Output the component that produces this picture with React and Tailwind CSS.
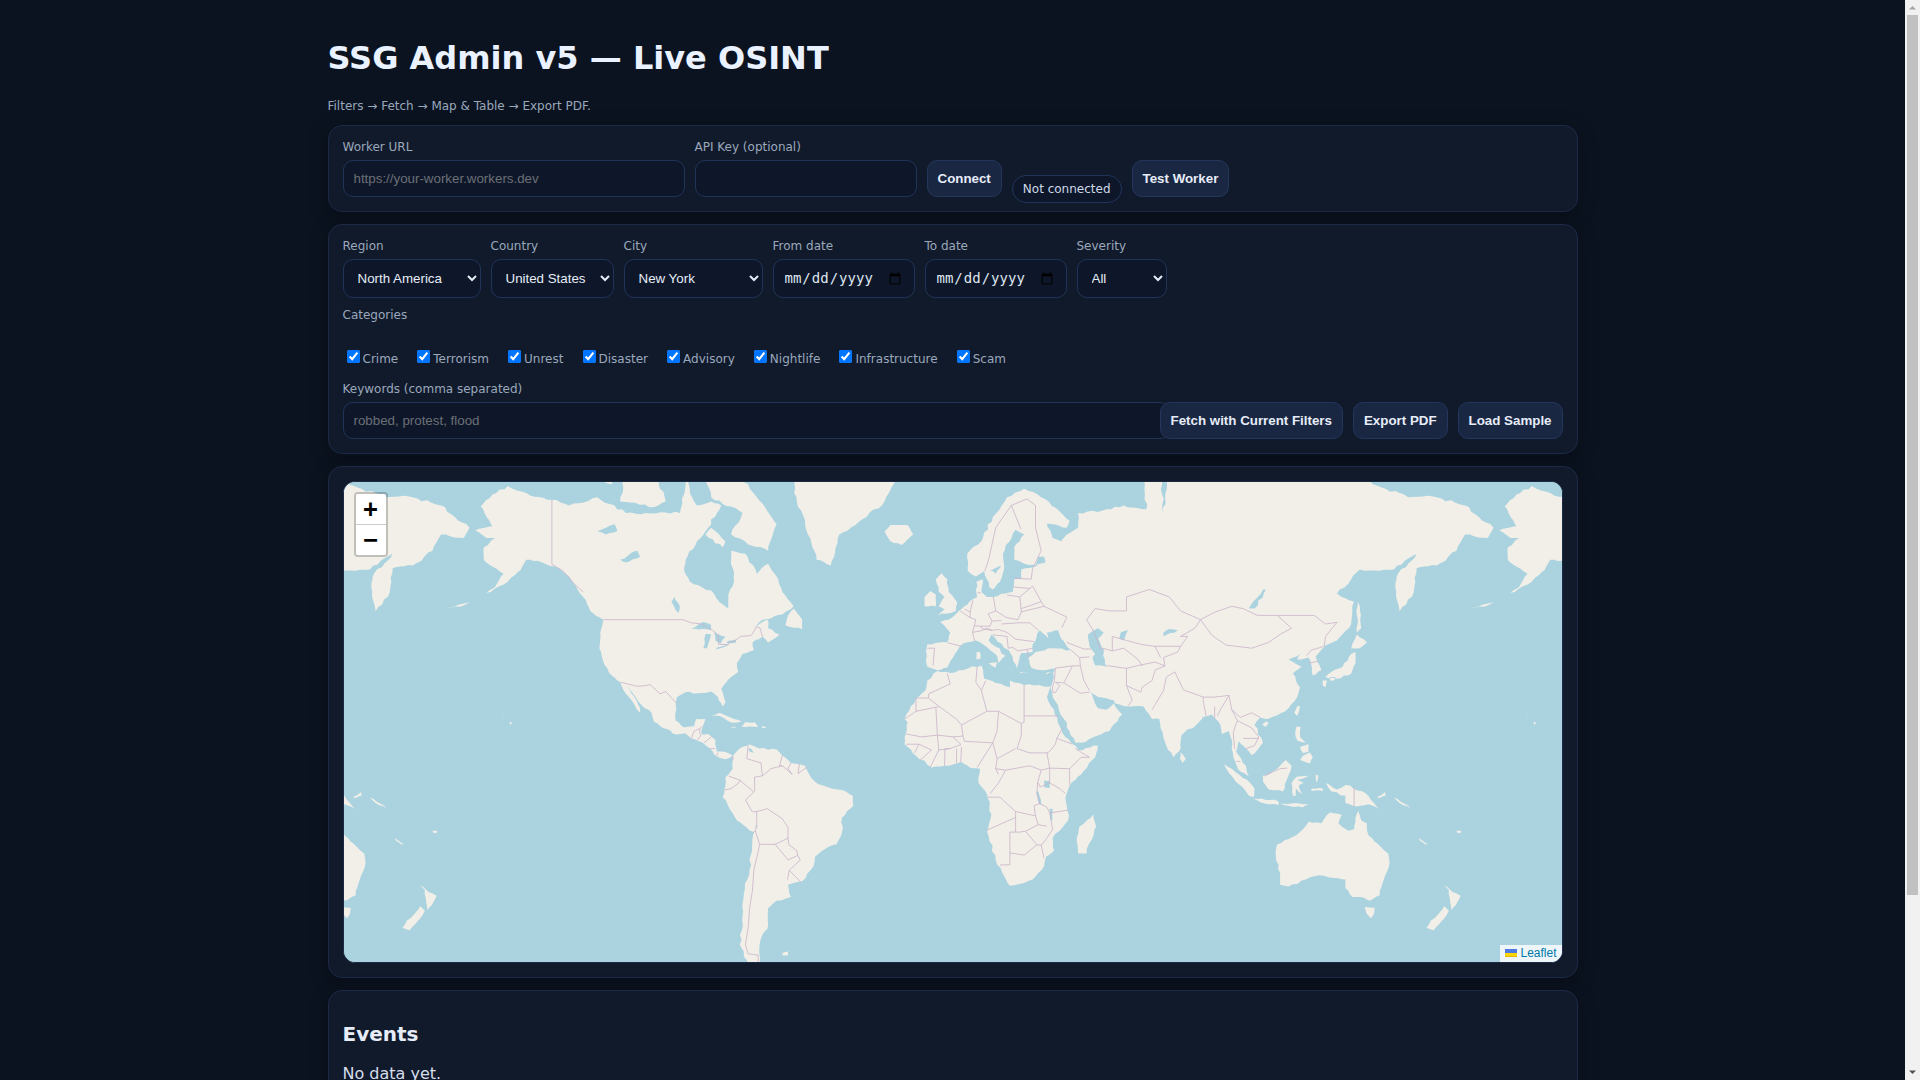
import React from 'react';

// Web Mercator at zoom 2, centred on 20N 0E, same as the tile map in the page
const R = 1024 / (2 * Math.PI);
const mercY = (lat) => Math.log(Math.tan(Math.PI / 4 + (lat * Math.PI) / 360));
const px = (lon) => 609 + (lon / 360) * 1024;
const py = (lat) => 240 + (mercY(20) - mercY(lat)) * R;
const toPath = (pts, close) =>
    'M' + pts.map(([lon, lat]) => `${px(lon).toFixed(1)} ${py(lat).toFixed(1)}`).join('L') + (close ? 'Z' : '');

// roughens a long straight edge so it reads as a coastline
let seed = 7;
const noise = () => {
    seed = (seed * 16807) % 2147483647;
    return (seed / 2147483647) * 2 - 1;
};
const coast = (pts) => {
    const out = [];
    pts.forEach((p, i) => {
        const q = pts[(i + 1) % pts.length];
        const ax = px(p[0]), ay = py(p[1]), bx = px(q[0]), by = py(q[1]);
        const len = Math.hypot(bx - ax, by - ay);
        const n = Math.max(1, Math.ceil(len / 5));
        const amp = Math.min(1.5, len * 0.06);
        for (let k = 0; k < n; k++) {
            const t = k / n;
            const d = k === 0 ? 0 : noise() * amp;
            out.push(`${(ax + (bx - ax) * t - ((by - ay) / len) * d).toFixed(1)} ${(ay + (by - ay) * t + ((bx - ax) / len) * d).toFixed(1)}`);
        }
    });
    return 'M' + out.join('L') + 'Z';
};

const LAND = [
    // North America
    [[-156.5,71.3],[-162,70.3],[-166,68.9],[-163,67],[-162,66.2],[-168,65.6],[-164,64.5],[-161,64.5],[-165,63],[-165,61],[-162,59.8],[-158,58.5],[-161,56],[-164,54.8],[-158,56.5],[-154,58.3],[-152,59.2],[-150,61],[-146,60.8],[-140,59.8],[-135,58],[-132,55.5],[-130,54],[-127.5,51],[-123,49],[-124,46],[-124.3,42],[-122.5,37.5],[-120,34.5],[-117,32.5],[-115.8,30],[-113,27],[-110,23],[-110,24.5],[-112,28],[-114.7,31.5],[-112.5,29],[-109.5,25.5],[-106,23],[-105,20],[-102,18],[-97,15.8],[-94,16.2],[-92,14.5],[-88,13],[-85.5,11],[-83,8.3],[-80,7.3],[-77.5,8.5],[-79.5,9.6],[-83,10],[-83.5,14],[-86,16],[-88.5,15.8],[-88,18.5],[-87,21],[-90.3,21],[-91,18.7],[-94.5,18.2],[-97.5,20.5],[-97.5,25.5],[-97,28],[-94,29.5],[-90,29.2],[-85,29.7],[-82.7,28],[-81,25],[-80,26.5],[-81.5,30.5],[-78,34],[-75.5,35.5],[-76,38],[-74,40.5],[-70,41.5],[-70.5,43.5],[-67,45],[-65,43.5],[-61,45.5],[-65,47],[-65,49],[-70,47],[-67,49],[-60,50.2],[-56,52],[-60,55],[-62,58],[-65,60.3],[-69,58.5],[-73,62],[-78,62.5],[-77,57],[-79,54.5],[-79,51.5],[-82,52.8],[-85,55.3],[-92.5,57],[-94.5,59],[-94,61],[-90,64],[-87,65.5],[-81.5,69],[-85,69.5],[-90,69],[-94,72],[-96,68],[-108,68],[-115,68],[-125,70],[-135,69],[-141,69.7],[-150,70.5]],
    // Arctic islands
    [[-80,73.5],[-72,71.5],[-62,66.5],[-65,62.5],[-72,63.5],[-78,65],[-74,68],[-85,70],[-89,73.5]],
    [[-117,69.5],[-105,68.8],[-101,69.5],[-105,73],[-115,73.5]],
    [[-125,72],[-120,71.5],[-118,74],[-124,74.5]],
    [[-100,72],[-95,72],[-95,74],[-100,74]],
    [[-87,65],[-81,63],[-80,64],[-85,66]],
    // Greenland, Iceland, Newfoundland
    [[-73,78],[-60,76],[-55,70],[-51,65],[-48,61],[-43,60],[-40,65],[-25,69],[-20,72],[-20,80],[-40,83],[-60,82]],
    [[-24,65.5],[-22,64],[-18,63.4],[-14,65],[-16,66.4],[-22,66.4]],
    [[-59,47.7],[-53,46.8],[-53,49],[-56,51.5],[-58,50]],
    // Caribbean
    [[-85,22],[-82,23],[-77,21],[-74.2,20.2],[-78,19.8],[-82,22]],
    [[-74.4,18.5],[-68.5,18.3],[-69.5,19.8],[-73,20]],
    [[-78.3,18.2],[-76.3,18],[-77,18.5]],
    [[-67.2,18],[-65.7,18.1],[-66,18.5],[-67.2,18.5]],
    // South America
    [[-77.5,8.5],[-75,11],[-71.5,12.4],[-68,11],[-62,10.7],[-60,8.5],[-57,6],[-52,5],[-50,1],[-48,-1],[-44,-2.5],[-39,-3.5],[-35.2,-5.5],[-35,-9],[-39,-13],[-39,-18],[-41,-22],[-45,-23.5],[-48.5,-26],[-49,-29],[-53,-33.5],[-58,-34.5],[-57,-38],[-62,-39],[-65,-41],[-65,-45],[-68,-50],[-68,-54],[-72,-54],[-75,-50],[-74,-43],[-73.5,-37],[-71.5,-30],[-70,-18],[-76,-14],[-81,-6],[-80,-2],[-80,1],[-77.5,4]],
    [[-60,-51.8],[-58,-51.5],[-58,-52.3],[-60,-52.3]],
    // Eurasia
    [[-9,37],[-9.5,39],[-9,43],[-2,43.5],[-1,46],[-4.5,48.5],[-1.5,49],[2,51],[4,52],[7,53.5],[8.5,54],[8.2,57],[10.5,57.5],[10,55],[12,54],[14,54],[18.5,54.7],[21,55],[21.5,57.5],[24,57.5],[24,59.3],[30,60],[25,60.3],[21.5,61],[21.5,63],[25,65],[22,65.7],[17.5,62],[18,60],[16.5,57],[14,55.5],[12.7,56],[11,59],[8,58],[5.2,59],[5,62],[10,64],[14,67.5],[19,70],[25,71],[31,70],[41,67],[40,66],[33,66.6],[35,64.5],[38,64],[40,65],[44,66],[44,68],[54,68.5],[60,69],[68,68.5],[67,72],[73,72.5],[74,68],[75,72],[80,73],[90,75.5],[105,77.5],[113,74],[128,72],[140,72.5],[160,70],[170,70],[180,69],[190,66],[188,64.5],[180,65],[177,62.5],[170,60],[163,59.5],[162,55],[157,51],[155.5,56],[156,58],[163,62],[155,59.3],[143,59.3],[135,54.7],[141,53],[140,48],[135,44],[131,42.7],[127.5,39.8],[129.5,36],[126.5,34.5],[126,37.5],[125,39.5],[121,39],[122,40.5],[118,39],[122.5,37],[119.5,35],[122,31],[121,28],[118,24.5],[113.5,22],[110,21],[108,21.5],[106,19],[109,13],[107,10.5],[105,8.7],[103,11],[100.5,13.5],[99.5,10],[103,5],[104,1.3],[101,3],[98.5,8],[98,14],[97,17],[94.5,16],[94,19],[91,22.5],[88,21.7],[86.5,20],[80.3,15.5],[80,11],[77.5,8],[75,12],[73,18],[72.5,21],[70,21],[69,22.5],[67,25],[61.5,25],[57,26],[56.5,27],[51,28],[48,30],[50,26],[51,24.5],[54,24],[56.5,26],[59.5,22.5],[55,17],[45,13],[43,13],[39,21],[35,28],[34.5,31.3],[36,36.5],[32,36],[27.5,36.7],[26.5,39.5],[29,41],[35,42],[41.5,41.5],[38,44.5],[37,46.5],[33,46],[33.5,44.5],[30.5,46.5],[28,43],[28,41],[24,40.7],[23,38],[22.5,36.5],[19.5,41.5],[13.5,45.5],[12.5,44],[18.5,40],[16,38],[15.5,40],[10.5,43],[8,44],[3.5,43.2],[0,39.5],[-2,36.8],[-5.5,36]],
    // Africa
    [[-5.5,35.8],[-1,35.2],[10,37.3],[11,33.5],[15,32.3],[20,31],[20,33],[25,31.7],[32,31.2],[34.5,31.3],[33,28],[35.5,24],[37.5,18.5],[39.5,15],[43,12],[44,10.5],[51,12],[50,8],[45,2],[41,-2],[39.5,-6],[40.5,-14],[35,-20],[35.5,-24],[32.7,-26],[32,-29],[28,-33],[25,-34],[20,-34.8],[18,-32],[15,-27],[12,-18],[13.5,-12],[12,-5],[9,-1],[9.5,4],[6,4.3],[3,6.3],[-3,5],[-7.5,4.4],[-13,8.5],[-17,12.5],[-17,15],[-16,20],[-17,21],[-13,27.5],[-9.7,30],[-9,33]],
    [[49.3,-12],[50.3,-16],[47,-25],[44,-25],[43.5,-21],[44.5,-16]],
    // Europe islands
    [[-5.5,50],[1,51],[1.5,52.8],[-1.5,55],[-2,57.5],[-4,58.6],[-6,57.5],[-5,55],[-3,54],[-5,52],[-3,51.3]],
    [[-10,52],[-6,52],[-6,54.5],[-8,55.2],[-10,54]],
    [[12.5,38],[15.5,38.2],[15,36.7]],
    [[8.2,39],[9.7,39.2],[9.5,41],[8.3,41]],
    [[23.5,35.5],[26.3,35.2],[26,35.1],[23.7,35.2]],
    [[32.5,34.8],[34.5,35.5],[33,35.3]],
    // Japan and the Far East
    [[130.9,34],[135,33.5],[140,35],[141.5,38],[141.5,41],[140,40.5],[137,37],[133,35.5]],
    [[140,42],[143,42],[145.5,43.5],[142,45.5]],
    [[130,33],[131.5,33],[131,31],[130,31.5]],
    [[132.5,34],[134.5,34],[134,33],[132.5,33]],
    [[142,54],[143,52],[143.5,47],[142,46],[142,50]],
    [[120,23],[121,22],[122,25],[121,25.2]],
    [[108.7,19.2],[110,18.3],[111,19.7],[110,20.2]],
    [[80,9.7],[81.8,7.5],[80.7,6],[79.8,7.5]],
    // Philippines and Indonesia
    [[120.3,16],[120.8,18.5],[122.2,18.3],[122,15],[124,13],[121,13.8]],
    [[122,7],[125.5,5.8],[126.5,8],[125.5,9.7],[123,8.5]],
    [[122,11.5],[125,12.5],[125,10],[123,9.5]],
    [[95.3,5.6],[98,4],[103.5,0],[106,-3],[105.8,-5.9],[104,-5.5],[100.5,-1.5],[97,2.5]],
    [[105.5,-6.5],[108.5,-6.5],[114.5,-7.5],[114.5,-8.7],[108,-7.8]],
    [[115,-8.3],[119,-8.2],[122,-8.3],[125,-8.4],[123,-9.5],[118,-9]],
    [[109,1.5],[111,2],[115,5],[117,7],[119,5],[117.7,1],[116,-4],[111,-3.3],[109,-0.5]],
    [[119.5,-5.5],[119,-1],[120.8,1.2],[125,1.5],[121,0],[123.3,-1],[121.5,-2],[122.8,-5],[120.5,-3],[120.5,-5.5]],
    [[127.5,2],[128.5,1.5],[128,-0.8],[127.5,0]],
    [[126,-3],[130,-3],[130,-3.8],[126,-3.8]],
    [[131,-1],[135,-3.3],[138,-1.7],[145,-4.5],[148,-8],[150.5,-10.5],[146,-8.5],[142,-9.2],[138,-8],[138,-5.5],[133,-4],[132,-2.8]],
    [[149,-6],[152,-4.2],[152,-5.5],[150,-6.3]],
    [[155,-6],[160,-9],[161,-10],[157,-8]],
    // Australia and New Zealand
    [[114,-22],[113.5,-26],[115,-31],[115,-34.5],[118,-35],[124,-33],[129,-31.7],[134,-32.5],[138,-33],[138,-35.5],[140.5,-38],[144.5,-38.2],[146.5,-39],[150,-37.5],[151.5,-33],[153.5,-28],[153,-25],[149.5,-22],[146,-19],[145.5,-15],[143.5,-14],[142.5,-10.8],[141.5,-13],[141,-17],[139,-17.5],[135.5,-15],[136.7,-12.2],[132.5,-11.3],[129.5,-15],[125,-14.5],[122,-18],[118,-20.3]],
    [[144.7,-40.7],[148.3,-40.9],[148,-42.5],[146.8,-43.6],[145.5,-42.5]],
    [[172.7,-34.5],[175.5,-36.5],[178.5,-37.7],[176.9,-40],[175.2,-41.5],[174.8,-39.5],[174.5,-38],[174.3,-36]],
    [[172.7,-40.5],[174.3,-41.7],[172.7,-43.7],[171,-45],[169,-46.6],[166.5,-46],[168,-44.2],[171,-42.2]],
    // Pacific dots
    [[177,-17.5],[178.7,-17.5],[178.5,-18.3],[177.3,-18.2]],
    [[164,-20],[167,-22],[166,-22],[164,-20.7]],
    [[-156,20.2],[-155,19.7],[-155.6,19]],
    [[-158.2,21.6],[-157.7,21.4],[-158,21.3]],
    [[-178,51.7],[-172,52.2],[-168,53.2],[-172,52.6]],
];

const WATER = [
    [[47.5,45.5],[51,47],[53,46],[51,44.5],[53,41.5],[52.8,40],[54,37],[50,37.3],[49,39.5],[50,40.5],[48,42.5]],
    [[59,46],[61.5,46.5],[60,44],[58.5,44.5]],
    [[104,51.5],[109,55.5],[110,55.5],[106,51.5]],
    [[76,46.8],[79,46.5],[74,45],[74,46]],
    [[-92,46.8],[-88,48.5],[-85,47.8],[-85,46.6],[-88,46.8]],
    [[-87.8,42],[-86.5,42],[-85,45.5],[-87,45.6]],
    [[-84,46],[-80,45],[-81.7,43.2],[-83.5,44]],
    [[-83.3,41.7],[-79,42.8],[-79,43],[-83,42.2]],
    [[-79.7,43.4],[-76.2,43.5],[-76.5,44.2],[-79,43.9]],
    [[-99,53],[-96.5,50.5],[-96,52],[-98,54]],
    [[-117,61],[-111,62.5],[-110,61.5],[-115,60.5]],
    [[-125,65.5],[-119,66.5],[-118,65.5],[-122,65]],
    [[32,-0.2],[34,-0.2],[34,-2.8],[32,-2.5]],
    [[29.3,-4],[30,-4],[31,-8.5],[30.3,-8.5]],
    [[34,-10],[35,-10],[35,-14],[34.3,-14]],
    [[29,60],[32.5,60.5],[32,61.5],[30,61.5]],
    [[17,60],[15,58.5],[14,59],[13,59]],
    [[-70,9.5],[-71.5,10],[-72,11],[-71,11]],
    [[-69.5,-16],[-68.7,-16.5],[-69,-15.5]],
];

const BORDERS = [
    // Canada / USA / Mexico
    [[-141,69.7],[-141,60.2],[-137,59],[-133,56.5],[-130,55]],
    [[-123,49],[-95,49],[-92,48.3],[-88.5,48],[-84.5,46.5],[-82.5,45.3],[-82.4,43],[-79,42.9],[-79,43.3],[-76.5,44],[-74.7,45],[-71,45.2],[-69,47.3],[-67.8,47],[-67,45]],
    [[-117,32.5],[-111,31.3],[-108,31.5],[-106.5,31.8],[-103,29],[-101,29.7],[-97.2,26]],
    [[-92,14.5],[-91,17],[-89,17.8],[-88.2,18.5]],[[-89,17.8],[-89,15.8]],[[-90,13.8],[-88.5,15.7]],[[-87.5,13],[-85,15]],[[-85.7,11],[-83.6,11]],[[-83,8.5],[-82.7,9.6]],
    [[-77.4,8.6],[-77.3,7]],
    // South America
    [[-72,12],[-72.5,7.5],[-67.5,6],[-67,1.5],[-69.8,1],[-69.7,-4]],
    [[-60,8.5],[-61,5],[-60,5],[-56.5,2],[-58,4],[-57,6]],[[-54,5.7],[-54.5,2.3]],[[-52,4.2],[-51.5,4.4],[-54.5,2.3]],[[-60,5],[-64,4],[-67,1.5]],
    [[-78.8,1.4],[-75,0],[-75.3,-1],[-78,-3],[-80.3,-3.5]],
    [[-75,0],[-70,-4.2],[-73,-7],[-70.6,-11],[-69,-11],[-69,-16],[-69.5,-17.5],[-70.4,-18.3]],
    [[-69,-11],[-65.3,-10],[-60,-13.5],[-58,-16.3],[-58,-20],[-57.7,-22.2],[-55,-24],[-54.6,-25.6]],
    [[-69.5,-17.5],[-68,-22],[-62.5,-22],[-58,-20]],
    [[-62.5,-22],[-58,-27],[-54.6,-25.6]],
    [[-68,-22],[-68.5,-24.5],[-70,-30],[-70.5,-36],[-71.5,-41],[-72,-46],[-73,-50],[-72,-52],[-68.5,-52.3],[-68.5,-54.5]],
    [[-57.6,-30.2],[-53.5,-33.7]],[[-54.6,-25.6],[-53.7,-27],[-57.6,-30.2],[-58.2,-33]],
    // Europe
    [[-9,42],[-6.5,42],[-7,37.3]],[[-1.8,43.4],[3,42.5]],
    [[2.5,51],[6,49.5],[8,49],[7.5,47.6],[6.9,46],[7.6,43.8]],[[4,51.4],[6,50.8],[6,49.5]],[[7,53.3],[6,50.8]],
    [[8.7,54.9],[9.8,54.8]],[[14.2,54],[15,51],[12.3,50.3],[13.7,48.7],[13,47.5],[9.6,47.5]],[[7.5,47.6],[9.6,47.5],[10.5,46.8],[13.7,46.5],[16,46.7]],[[6.9,46],[10,46.4],[12,47],[13.7,46.5]],
    [[15,51],[18.8,49.5],[22.8,49],[24,50.8],[23.5,54],[19,54.4]],[[17,48.8],[13.7,48.7]],[[17,48],[22.8,48.3],[27,48.3],[30,46.5]],[[16,46.7],[19,46],[22,44.3],[28.5,43.7]],
    [[19.4,42],[21,42.2],[22.8,41.3],[26.2,41.7],[28,42]],[[14,45.4],[19,45],[19.4,42]],[[23.5,54],[27,55.7],[28,56.2],[31,53],[24,51.5]],[[21,56],[27,55.7]],[[21.5,57.7],[27.5,57.5]],[[28,59.5],[27.5,57.5]],
    [[24,50.8],[32,52],[40,49.6],[38.3,47.1]],[[31,53],[32,52]],
    [[28,59.5],[31,62.5],[29,66],[29,69],[26,69.8],[20.5,69],[23.7,66],[24,65.8]],[[20.5,69],[15,66],[12.5,61],[11.2,59]],
    // Middle East and Central Asia
    [[26.2,41.7],[26.5,39.5]],[[36,36.6],[42,37.2],[44.8,37.2],[44.5,39.5],[41.5,41.5]],[[44.5,39.5],[48,39.7]],[[40,43.5],[46,41.8],[48.5,41.8]],
    [[36,32.5],[39,32.3],[42,37.2]],[[36,36.6],[35.7,33],[35,31.3],[35,29.5]],[[36,32.5],[37.5,31.5],[36,29.4],[35,29.5]],[[39,32.3],[44.8,29.2],[48,29.5]],
    [[44.8,37.2],[46,33],[48,30]],[[52,41.5],[49.5,46.2],[47,49],[50,51.5],[55,51],[61,51],[61,54],[69,55.5],[76,54],[80,51],[87,49]],
    [[54,37.3],[61,36.5],[61,31.5],[63,27],[61.5,25.2]],[[61,36.5],[65,37.3],[71,38.3],[74.5,37.2]],[[61,31.5],[66,29.5],[66.5,31],[70,33],[71,36],[74.5,37.2]],[[70,24],[74,30],[75,34],[78,35.5]],
    [[52.5,42],[56,41.3],[56,45],[61,44],[66,43],[71,42.5],[80,42.5],[79,41],[74,39.5],[74.5,37.2]],[[56,41.3],[60,42],[65,39],[66.5,37.3]],[[71,42.5],[73,39.5]],[[80,42.5],[82.5,45],[80,45],[85,47],[87,49]],
    // Mongolia / China
    [[87,49],[92,50.7],[98,52],[102,51.5],[107,50],[114,50],[119,47],[115,45.5],[111,43.5],[105,42],[96,42.8],[91,45.3],[87,49]],
    [[119,50],[127,50],[131,48],[135,48.4],[131,45],[130.5,42.5]],[[114,50],[119,50]],[[130.5,42.5],[126,41.5],[124.3,40]],[[125,38],[128.3,38.5]],
    [[78,35.5],[81,30.2],[88,28],[92,28],[97,28.5],[98,24],[101,21.5],[105,23],[108,21.5]],[[88,28],[88,26.5],[89,22]],[[92,25],[92,21.2]],[[97,28.5],[94,24],[93,22]],[[98,24],[100,20.5],[98.5,16.5],[99,11]],[[100,20.5],[105,18],[107.5,15],[106,12],[103,11]],[[102,14.5],[107.5,14.5]],[[101,6.5],[99.7,6.6]],
    [[109.5,1.5],[115,4],[117.5,4.2]],[[141,-2.6],[141,-9.1]],
    // Africa
    [[-2,35],[-1,32],[-8.5,29],[-8.7,27.7],[-13,27.7]],[[-8.7,27.7],[-4.8,25],[1.2,21],[3,19],[11.9,23.5],[10,30],[8,32.5],[8.5,37]],[[-13,27.7],[-13,23.5],[-17,21]],[[-13,23.5],[-5,25]],[[-16.5,16],[-11,15],[-5.5,15.6],[-6,24.5]],[[-5.5,15.6],[0,15],[3.5,15.3],[3,19]],[[3.5,15.3],[4,13.5],[14,13]],[[0,15],[2.8,12.4],[-1,11],[-5,10.5],[-5.5,15.6]],[[11.5,33],[10,30]],[[25,31.7],[25,20],[24,19.5],[24,15.5],[22.5,11],[27,9.5],[33,9.5],[34,10],[36,12.5],[36.5,14.5],[38.5,18]],[[25,22],[37,22]],[[11.9,23.5],[16,23.5],[24,19.5]],[[16,23.5],[15.5,17],[14,13],[15.5,7.5],[15,4],[16,2]],[[14,13],[8.5,4.5]],[[3,11.5],[2.7,6.3]],[[-3,5],[-2.8,11],[-1,11]],[[1.3,11],[1.2,6]],[[-5,10.5],[-8,4.5]],[[-7.6,10.5],[-11.5,7]],[[-12,12.5],[-13.5,9.5]],[[-16.5,12.5],[-12,12.5],[-7.6,10.5]],[[15.5,7.5],[22,11]],[[15,4],[18.5,3.5],[27,5],[31,3.5],[34,4.2],[41,4],[45,8],[48,8],[43,11]],[[33,9.5],[34,4.2]],[[36.5,14.5],[42,12.5]],[[34,4.2],[34,-1],[37.5,-3],[39.5,-4.7]],[[41,4],[41,-1.7]],[[31,3.5],[29.7,-1],[29.5,-5],[30.5,-8.2],[28.5,-9],[29,-12.5],[22,-11],[22,-13],[12,-17.3]],[[18.5,3.5],[16,-1],[13,-4.8]],[[12.2,-6],[16.5,-6],[22,-11]],[[30.5,-8.2],[33,-9.5],[34,-11.5],[35,-17],[33,-20],[31,-22.3],[32,-26.5]],[[34,-11.5],[40.5,-10.5]],[[30,-1],[30.6,-2.4],[34,-1]],[[29,-12.5],[30,-15.5],[25.5,-17.7],[23.5,-18],[20,-18],[20,-28.5],[16.5,-28.6]],[[30,-15.5],[33,-16]],[[25.5,-17.7],[29.5,-22.2],[31,-22.3]],[[20,-24.8],[25,-25.5],[29.5,-22.2]],[[22,-13],[22,-18]],
];

const OFFSETS = [-1024, 0, 1024];
const LAND_PATH = LAND.map(coast).join('');
const WATER_PATH = WATER.map(coast).join('');
const BORDER_PATH = BORDERS.map((p) => toPath(p, false)).join('');

const WorldMap = () => (
    <svg viewBox="0 0 1218 480" className="block w-full h-full" fill="none">
        <rect width="1218" height="480" fill="#aad3df" />
        {OFFSETS.map((dx) => (
            <g key={dx} transform={`translate(${dx} 0)`}>
                <path d={LAND_PATH} fill="#f2efe9" strokeLinejoin="round" />
                <path d={WATER_PATH} fill="#aad3df" />
                <path d={BORDER_PATH} stroke="#c9b3c9" strokeWidth="0.8" strokeLinejoin="round" />
            </g>
        ))}
    </svg>
);

const labelCls = 'block text-[12px] leading-[14px] text-[#9aa8bc]';
const inputCls = "h-[37px] rounded-[10px] border border-[#20345a] bg-[#0e1729] px-[10px] font-['Liberation_Sans'] text-[13.33px] text-[#e6edf8] placeholder:text-[#6b6f76] outline-none";
const selectCls = "h-[39px] rounded-[10px] border border-[#20345a] bg-[#0e1729] px-[10px] font-['Liberation_Sans'] text-[13.33px] text-[#e6edf8] outline-none";
const dateCls = "h-[39px] rounded-[10px] border border-[#20345a] bg-[#0e1729] px-[10px] font-['DejaVu_Sans_Mono'] text-[14px] text-[#dfe6f1] outline-none";
const btnCls = "relative h-[37px] shrink-0 rounded-[10px] border border-[#24365c] bg-[#1a2742] px-[10px] font-['Liberation_Sans'] text-[13.33px] font-bold text-[#e6edf8]";
const cardCls = 'mb-[12px] rounded-[14px] border border-[#1c2a45] bg-[#111a2b] px-[14px] shadow-[0_4px_20px_rgba(0,0,0,0.25)]';

const CATEGORIES = ['Crime', 'Terrorism', 'Unrest', 'Disaster', 'Advisory', 'Nightlife', 'Infrastructure', 'Scam'];

const Field = ({ label, children }) => (
    <div>
        <label className={`${labelCls} mb-[6px]`}>{label}</label>
        {children}
    </div>
);

// the browser's classic scrollbar seen in the screenshot
const Scrollbar = () => (
    <div className="flex h-screen w-[15px] shrink-0 flex-col items-center bg-[#f1f1f1]">
        <svg width="15" height="15" viewBox="0 0 15 15" className="shrink-0"><path d="M4 9.5 7.5 6 11 9.5Z" fill="#a3a3a3" /></svg>
        <div className="h-[880px] w-[11px] shrink-0 bg-[#c1c1c1]" />
        <div className="flex-1" />
        <svg width="15" height="15" viewBox="0 0 15 15" className="shrink-0"><path d="M4 5.5 7.5 9 11 5.5Z" fill="#505050" /></svg>
    </div>
);

export default function App() {
    return (
        <div className="flex h-screen overflow-hidden bg-[#0b1320] font-['DejaVu_Sans',sans-serif] text-[#e6edf8]">
            <div className="min-w-0 flex-1">
                <div className="mx-auto max-w-[1250px]">
                    <h1 className="pt-[40px] text-[32px] font-bold leading-[37px] text-[#eaf1ff]">SSG Admin v5 — Live OSINT</h1>
                    <p className="mt-[19px] mb-[9px] text-[12px] leading-[20px] text-[#9aa8bc]">Filters → Fetch → Map &amp; Table → Export PDF.</p>

                    {/* Connection */}
                    <div className={`${cardCls} pt-[14px] pb-[14px]`}>
                        <div className="flex items-end gap-[10px]">
                            <Field label="Worker URL">
                                <input className={`${inputCls} w-[342px]`} placeholder="https://your-worker.workers.dev" />
                            </Field>
                            <Field label="API Key (optional)">
                                <input className={`${inputCls} w-[222px]`} />
                            </Field>
                            <button className={btnCls}>Connect</button>
                            <span className="-mb-[6px] flex h-[28px] items-center rounded-full border border-[#20345a] bg-[#0e1729] px-[10px] text-[12px] text-[#cdd8e8]">Not connected</span>
                            <button className={btnCls}>Test Worker</button>
                        </div>
                    </div>

                    {/* Filters */}
                    <div className={`${cardCls} pt-[14px] pb-[14px]`}>
                        <div className="flex gap-[10px]">
                            <Field label="Region">
                                <select className={`${selectCls} w-[138px]`}><option>North America</option></select>
                            </Field>
                            <Field label="Country">
                                <select className={`${selectCls} w-[123px]`}><option>United States</option></select>
                            </Field>
                            <Field label="City">
                                <select className={`${selectCls} w-[139px]`}><option>New York</option></select>
                            </Field>
                            <Field label="From date">
                                <input type="date" className={`${dateCls} w-[142px]`} />
                            </Field>
                            <Field label="To date">
                                <input type="date" className={`${dateCls} w-[142px]`} />
                            </Field>
                            <Field label="Severity">
                                <select className={`${selectCls} w-[90px]`}><option>All</option></select>
                            </Field>
                        </div>

                        <div className={`${labelCls} mt-[10px]`}>Categories</div>
                        <div className="mt-[26px] flex h-[17px] gap-[15.1px]">
                            {CATEGORIES.map((c) => (
                                <label key={c} className="flex items-start text-[12px] leading-[14px] text-[#9aa8bc]">
                                    <input type="checkbox" defaultChecked className="mt-[2px] mr-[3px] ml-[4px] h-[13px] w-[13px]" />
                                    <span className="mt-[4px]">{c}</span>
                                </label>
                            ))}
                        </div>

                        <div className="mt-[17px] flex items-end gap-[10px]">
                            <div className="-mr-[20px] min-w-0 flex-1">
                                <label className={`${labelCls} mb-[6px]`}>Keywords (comma separated)</label>
                                <input className={`${inputCls} w-full`} placeholder="robbed, protest, flood" />
                            </div>
                            <button className={btnCls}>Fetch with Current Filters</button>
                            <button className={btnCls}>Export PDF</button>
                            <button className={btnCls}>Load Sample</button>
                        </div>
                    </div>

                    {/* Map */}
                    <div className={`${cardCls} py-[14px]`}>
                        <div className="relative h-[482px] overflow-hidden rounded-[12px] border border-[#1c2a45] bg-[#aad3df]">
                            <WorldMap />
                            <div className="absolute left-[10px] top-[10px] w-[34px] rounded-[4px] border-2 border-black/20 bg-clip-padding">
                                <div className="flex h-[31px] w-[30px] items-center justify-center rounded-t-[2px] border-b border-[#ccc] bg-white font-['DejaVu_Sans_Mono'] text-[24px] font-bold leading-[30px] text-black">+</div>
                                <div className="flex h-[30px] w-[30px] items-center justify-center rounded-b-[2px] bg-white font-['DejaVu_Sans_Mono'] text-[24px] font-bold leading-[30px] text-black">−</div>
                            </div>
                            <div className="absolute bottom-0 right-0 flex h-[17px] items-center gap-[3px] bg-white/80 px-[5px] pb-[1px] font-['Liberation_Sans'] text-[12px] text-[#0078a8]">
                                <svg width="12" height="8" viewBox="0 0 12 8">
                                    <path fill="#4C7BE1" d="M0 0h12v4H0z" />
                                    <path fill="#FFD500" d="M0 4h12v3H0z" />
                                    <path fill="#E0BC00" d="M0 7h12v1H0z" />
                                </svg>
                                <span>Leaflet</span>
                            </div>
                        </div>
                    </div>

                    {/* Events */}
                    <div className={`${cardCls} mb-0 h-[283px] pt-[31px]`}>
                        <h2 className="text-[20px] font-bold leading-[24px] text-[#e6edf8]">Events</h2>
                        <p className="mt-[18px] text-[16px] leading-[20px] text-[#d5deeb]">No data yet.</p>
                    </div>
                </div>
            </div>
            <Scrollbar />
        </div>
    );
}
